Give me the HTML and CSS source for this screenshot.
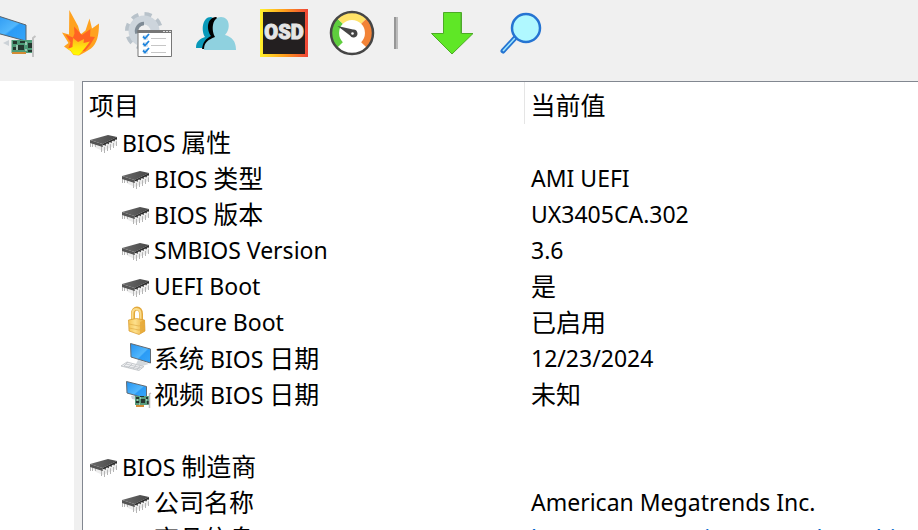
FILE: index.html
```
<!DOCTYPE html>
<html lang="zh-CN">
<head>
  <meta charset="UTF-8">
  <meta name="viewport" content="width=device-width, initial-scale=1.0">
  <title>BIOS</title>
  <link rel="stylesheet" href="styles.css">
</head>
<body>
  <svg class="defs" aria-hidden="true">
    <defs>
      <linearGradient id="screen" x1="0" y1="0" x2="1" y2="1">
        <stop offset="0" stop-color="#2492f0"/>
        <stop offset=".55" stop-color="#52b7fc"/>
        <stop offset=".6" stop-color="#2b9bf5"/>
        <stop offset="1" stop-color="#36a6fa"/>
      </linearGradient>
      <linearGradient id="gold" x1="0" x2="1">
        <stop offset="0" stop-color="#f5c557"/>
        <stop offset=".4" stop-color="#fde08c"/>
        <stop offset="1" stop-color="#e9ac3a"/>
      </linearGradient>
      <linearGradient id="dark" x1="0" x2="1">
        <stop offset="0" stop-color="#6a6a6a"/>
        <stop offset="1" stop-color="#484848"/>
      </linearGradient>
      <linearGradient id="rim" x1="0" x2="1">
        <stop offset="0" stop-color="#fff22d"/>
        <stop offset=".5" stop-color="#ff9f1c"/>
        <stop offset="1" stop-color="#ee4438"/>
      </linearGradient>
      <linearGradient id="core" x1="0" y1="1" x2="0" y2="0">
        <stop offset="0" stop-color="#ffff00"/>
        <stop offset=".5" stop-color="#ffe010"/>
        <stop offset="1" stop-color="#ffae1e"/>
      </linearGradient>
    </defs>
    <symbol id="chip" viewBox="0 0 32 32">
      <path d="M4 18l10 3 14-6v4l-13 6-7-3z" fill="#ededed"/>
      <path d="M2.500 16v5M4.500 17v4M7.500 18v3M13.500 20v6M16.500 20v7M19.500 19v6M22.500 18v6M25.500 17v5M28.500 14v6" stroke="#b5b5b5" fill="none"/>
      <path d="M2 14 20 9l9 2-14.500 7z" fill="url(#dark)"/>
      <path d="M2 14l12.500 4v3L2 17z" fill="#555"/>
      <path d="M14.500 18 29 11v3l-14.500 7z" fill="#2c2c2c"/>
      <path d="M15 20.500 29 14" stroke="#f2f2f2" stroke-width="2" stroke-dasharray="2 1.300"/>
    </symbol>
    <symbol id="lock" viewBox="0 0 32 32">
      <path d="M13 15V7.500C13 1 21 .500 21 8v7" fill="none" stroke="#e3a83a" stroke-width="4"/>
      <path d="M12.500 15V7.500C12.500 1.500 20.500 1 20.500 8v7" fill="none" stroke="#fbdc8b" stroke-width="2"/>
      <path d="M8.500 14q8-3 16 0L25 25l-6 3.500L9 25z" fill="url(#gold)" stroke="#d7982b" stroke-width=".7"/>
      <path d="M20 16v12l5-3-.5-11z" fill="#e7a632" opacity=".7"/>
      <path d="M9 18l10 2 6-2M9 22l10 2 6-2" fill="none" stroke="#e1ad47" stroke-width=".7"/>
    </symbol>
    <symbol id="computer" viewBox="0 0 32 32">
      <path d="M18 18l7 2 4 2-7 2-6-2z" fill="#d4d9dd"/>
      <path d="M1 24l6-4 17 4.500-5 4z" fill="#f0f1f3" stroke="#b9bcc0" stroke-width=".8"/>
      <path d="M4 24l16 3M6 22l16 4M8 20l-4 4M12 22l-4 4M16 23l-3 4M20 24l-3 4" stroke="#b9bdc1" stroke-width=".7" fill="none"/>
      <path d="M10.500 1.500 30.500 7v14L11 15z" fill="url(#screen)" stroke="#626a72"/>
    </symbol>
    <symbol id="card" viewBox="0 0 32 32">
      <path d="M11 18l6-1v5l-5-1z" fill="#cdd3d9"/>
      <path d="M6.500 3.500 26.500 8.500v12L7 15z" fill="url(#screen)" stroke="#626a72"/>
      <path d="M15 18h14v9H15z" fill="#5a9d7e"/>
      <path d="M16 19h3v2h-3zM21 21h4v4h-4zM26 19h2v2h-2zM16 23h3v2h-3zM27 23h2v3h-2zM20 18h4v1h-4z" fill="#27372f"/>
      <path d="M17 22h1M20 20h1M26 22h1M19 26h1" stroke="#dcebe3"/>
      <path d="M16 27h8v2h-8z" fill="#d18c37"/>
      <path d="M31 15l-1.500 1v14" fill="none" stroke="#bdbdbd" stroke-width="1.500"/>
    </symbol>
  </svg>

  <nav class="toolbar">
    <button class="tool" aria-label="Video">
      <svg viewBox="0 0 48 48">
        <path d="M15 34l6-3v6z" fill="#ccd2d7"/>
        <path d="M4 5 38 16v16L5 23z" fill="url(#screen)" stroke="#59636c"/>
        <path d="M23.500 31H46v13H23.500z" fill="#4e9b78"/>
        <path d="M25 32h4v3h-4zM30 36h6v5h-6zM40 34h4v5h-4zM25 38h3v3h-3zM32 32h5v2h-5zM40 41h4v2h-4z" fill="#24382f"/>
        <path d="M29 36v5M38 33v3M38 40v2" stroke="#e4eee9"/>
        <path d="M24 43h14v2H24z" fill="#d38b34"/>
        <path d="M47.500 27l-2.500 2v19" fill="none" stroke="#c3c3c3" stroke-width="2"/>
      </svg>
    </button>
    <button class="tool" aria-label="Burn">
      <svg viewBox="0 0 48 48">
        <path d="M13.300 1 22 17l2.500 8.500 5-4 4-12L36 19.500l7-5c0 12-2 20-8 25q-6 4-12 7l-5.500-.5-3-4L8 37.500l4.500-3.500L6 23.500l7 2z" fill="#ffa21f"/>
        <path d="M18 17.500 26 26l8.500-6-.5 7.500 5 .5-5 8-5 6-13 1-3.500-4 2-5.500-5-8 7.500 3 1.500-4z" fill="#ff6423"/>
        <path d="M17 29l5 4 6-3-.5 4 6.500-1.500-5 6.500-6 7-5.500-.5-3-4-3-1.500 5-2z" fill="url(#core)"/>
      </svg>
    </button>
    <button class="tool" aria-label="Preferences">
      <svg viewBox="0 0 48 48">
        <g fill="none">
          <circle cx="20" cy="22" r="16.500" stroke="#b8c2ca" stroke-width="5" stroke-dasharray="7 5.959"/>
          <circle cx="20" cy="22" r="11" stroke="#cdd5dc" stroke-width="9"/>
          <path d="M20 14.500a7.500 7.500 0 0 0-7 10" stroke="#7f8b95" stroke-width="3.500"/>
        </g>
        <path d="M14 21.500h33.500v26H14z" fill="#fff" stroke="#777"/>
        <path d="M13.500 21H48v3H13.500z" fill="#777"/>
        <path d="M39 22.500h2M42 22.500h2M45 22.500h2" stroke="#ddd"/>
        <path d="M19 26h5v5h-5zM19 33h5v5h-5zM19 40h5v5h-5z" fill="#dce6ef"/>
        <path d="M19 27.500l2 2 4-4.500M19 34.500l2 2 4-4.500M19 41.500l2 2 4-4.500" fill="none" stroke="#2086de" stroke-width="1.800"/>
        <path d="M27 29.500h15M27 36.500h15M27 43.500h15" stroke="#c6c6c6"/>
      </svg>
    </button>
    <button class="tool" aria-label="Users">
      <svg viewBox="0 0 48 48">
        <path d="M4 39c0-7 4-9 9-11-4-6-3-20 6-20l9 4-8 27z" fill="#0999b9"/>
        <path d="M10 40c1-8 4-10 9-13-5-7-4-18 5-19l5 4-5 15-10 13z" fill="#000"/>
        <path d="M12 41c0-8 4-10 11-13-4-7-3-20 6-20s10 12 4 18c7 2 11 6 11 15z" fill="#8fd1df"/>
      </svg>
    </button>
    <button class="tool" aria-label="OSD">
      <svg viewBox="0 0 48 48">
        <path d="M0 0h48v48H0z" fill="url(#rim)"/>
        <path d="M3 3h42v42H3z" fill="#231f20"/>
        <text class="osd" x="24" y="30" text-anchor="middle">OSD</text>
      </svg>
    </button>
    <button class="tool" aria-label="Benchmark">
      <svg viewBox="0 0 48 48">
        <circle cx="24" cy="24" r="21" fill="#fff"/>
        <g fill="none" stroke-width="8">
          <path d="M12 36A17 17 0 0 1 12 12" stroke="#5fce3e"/>
          <path d="M12 12A17 17 0 0 1 36 12" stroke="#ffe268"/>
          <path d="M36 12A17 17 0 0 1 36 36" stroke="#f28337"/>
        </g>
        <circle cx="24" cy="24" r="21" fill="none" stroke="#464646" stroke-width="2.500"/>
        <path d="M9.500 17 25 20.500a4 4 0 1 1-3 6z" fill="#454545"/>
        <circle cx="24.500" cy="24.500" r="1.300" fill="#fff"/>
      </svg>
    </button>
    <span class="separator"></span>
    <button class="tool" aria-label="Update">
      <svg viewBox="0 0 48 48">
        <path d="M15.500 3.500h18v21H45L24 45 3.500 24.500h12z" fill="#5fe726" stroke="#4cab25"/>
        <path d="M33 4v20.500" stroke="#50a834"/>
      </svg>
    </button>
    <button class="tool" aria-label="Search">
      <svg viewBox="0 0 48 48">
        <path d="M19 29 7 42" stroke="#2574d2" stroke-width="5" stroke-linecap="round"/>
        <path d="M19 29 7 42" stroke="#9fe7fc" stroke-width="1.500"/>
        <circle cx="30" cy="19" r="14" fill="#b0f8ff" stroke="#2574d2" stroke-width="2.500"/>
      </svg>
    </button>
  </nav>

  <main class="content">
    <aside class="tree"></aside>
    <section class="list">
      <table>
        <thead>
          <tr><th><b>项目</b></th><th class="value-head"><b>当前值</b></th></tr>
        </thead>
        <tbody>
          <tr><td><div class="item"><svg><use href="#chip"/></svg><span>BIOS <b>属性</b></span></div></td><td></td></tr>
          <tr class="sub"><td><div class="item"><svg><use href="#chip"/></svg><span>BIOS <b>类型</b></span></div></td><td>AMI UEFI</td></tr>
          <tr class="sub"><td><div class="item"><svg><use href="#chip"/></svg><span>BIOS <b>版本</b></span></div></td><td>UX3405CA.302</td></tr>
          <tr class="sub"><td><div class="item"><svg><use href="#chip"/></svg><span>SMBIOS Version</span></div></td><td>3.6</td></tr>
          <tr class="sub"><td><div class="item"><svg><use href="#chip"/></svg><span>UEFI Boot</span></div></td><td><b>是</b></td></tr>
          <tr class="sub"><td><div class="item"><svg><use href="#lock"/></svg><span>Secure Boot</span></div></td><td><b>已启用</b></td></tr>
          <tr class="sub"><td><div class="item"><svg><use href="#computer"/></svg><span><b>系统</b> BIOS <b>日期</b></span></div></td><td>12/23/2024</td></tr>
          <tr class="sub"><td><div class="item"><svg><use href="#card"/></svg><span><b>视频</b> BIOS <b>日期</b></span></div></td><td><b>未知</b></td></tr>
          <tr><td></td><td></td></tr>
          <tr><td><div class="item"><svg><use href="#chip"/></svg><span>BIOS <b>制造商</b></span></div></td><td></td></tr>
          <tr class="sub"><td><div class="item"><svg><use href="#chip"/></svg><span><b>公司名称</b></span></div></td><td>American Megatrends Inc.</td></tr>
          <tr class="sub"><td><div class="item"><svg></svg><span><b>商品信息</b></span></div></td><td><a href="#">https://www.ami.com/products/bios</a></td></tr>
        </tbody>
      </table>
    </section>
  </main>
</body>
</html>
```

FILE: styles.css
```
* {
  box-sizing: border-box;
}
html {
  height: 100%;
}
body {
  margin: 0;
  height: 100%;
  display: flex;
  flex-direction: column;
  overflow: hidden;
  background: #f0f0f0;
  color: #000;
  font: 23px/32px "Noto Sans", "Noto Sans CJK SC", sans-serif;
}
.defs {
  position: absolute;
  width: 0;
  height: 0;
}

/* toolbar */
.toolbar {
  flex: none;
  display: flex;
  align-items: center;
  gap: 20px;
  height: 81px;
  padding-bottom: 15px;
  margin-left: -12px;
}
.tool {
  flex: none;
  width: 48px;
  height: 48px;
  padding: 0;
  border: 0;
  background: none;
}
.tool svg {
  display: block;
  width: 48px;
  height: 48px;
  overflow: visible;
}
.osd {
  font: 900 20px Roboto, sans-serif;
  fill: #e5e5e5;
  stroke: #e5e5e5;
}
.separator {
  width: 4px;
  height: 32px;
  margin: 0 10px 0 -2px;
  background: #bbb;
  border-left: 2px solid #969696;
}

/* panes */
.content {
  flex: 1;
  min-height: 0;
  display: flex;
  gap: 8px;
}
.tree {
  flex: none;
  width: 74px;
  background: #fff;
}
.list {
  flex: 1;
  min-width: 0;
  overflow: hidden;
  background: #fff;
  border: solid #828790;
  border-width: 1px 0 0 1px;
}
table {
  width: 100%;
  table-layout: fixed;
  border-collapse: collapse;
}
th {
  height: 42px;
  padding: 4px 6px 0;
  text-align: left;
}
th:first-child {
  width: 441px;
}
.value-head {
  border-left: 1px solid #e5e5e5;
}
td {
  height: 36px;
  padding: 0 7px;
  white-space: nowrap;
}
td:first-child {
  padding-left: 5px;
}
.sub td:first-child {
  padding-left: 37px;
}
.item {
  display: flex;
  align-items: center;
  gap: 2px;
  height: 36px;
}
.item svg {
  width: 32px;
  height: 32px;
}
/* chinese text is a bit larger than latin */
b {
  font: 25px/30px "Noto Sans CJK SC", sans-serif;
}
a {
  color: #0066cc;
  text-decoration: none;
}
```
